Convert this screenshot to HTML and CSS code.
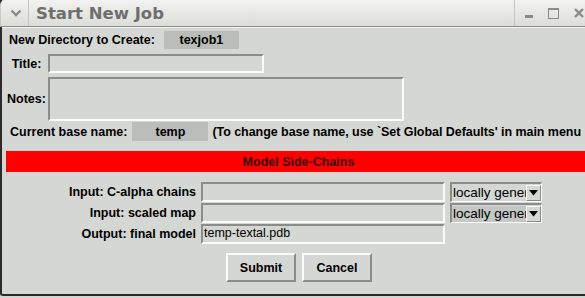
FILE: index.html
```html
<!DOCTYPE html>
<html>
<head>
<meta charset="utf-8">
<link rel="stylesheet" href="styles.css">
</head>
<body>
<div class="window">
  <div class="titlebar">
    <div class="menu-btn">
      <svg width="12" height="8" viewBox="0 0 12 8"><path d="M1.5 1.5 L6 6 L10.5 1.5" fill="none" stroke="#8a8a8a" stroke-width="2.4"/></svg>
    </div>
    <div class="title">Start New Job</div>
    <div class="controls">
      <span class="ctl-min"></span>
      <span class="ctl-max"></span>
      <span class="ctl-close">
        <svg width="10" height="10" viewBox="0 0 10 10"><path d="M1 1 L9 9 M9 1 L1 9" stroke="#8a8a8a" stroke-width="2.4"/></svg>
      </span>
    </div>
  </div>
  <div class="content">
    <div class="row-dir">
      <span class="lbl">New Directory to Create:</span>
      <span class="valbox dirbox">texjob1</span>
    </div>
    <div class="row-field row-title">
      <span class="lbl fl">Title:</span>
      <span class="entry title-entry"></span>
    </div>
    <div class="row-field row-notes">
      <span class="lbl fl">Notes:</span>
      <span class="entry notes-entry"></span>
    </div>
    <div class="row-base">
      <span class="lbl">Current base name:</span>
      <span class="valbox basebox">temp</span>
      <span class="lbl hint">(To change base name, use `Set Global Defaults' in main menu</span>
    </div>
    <div class="banner">Model Side-Chains</div>
    <div class="form">
      <span class="lbl flabel">Input: C-alpha chains</span>
      <span class="entry fentry"></span>
      <span class="combo"><span class="combo-text">locally gener</span><span class="combo-btn"><svg width="9" height="6" viewBox="0 0 9 6"><path d="M0 0 H9 L4.5 5.5 Z" fill="#000"/></svg></span></span>
      <span class="lbl flabel">Input: scaled map</span>
      <span class="entry fentry"></span>
      <span class="combo combo-dark"><span class="combo-text">locally gener</span><span class="combo-btn"><svg width="9" height="6" viewBox="0 0 9 6"><path d="M0 0 H9 L4.5 5.5 Z" fill="#000"/></svg></span></span>
      <span class="lbl flabel">Output: final model</span>
      <span class="entry fentry">temp-textal.pdb</span>
      <span></span>
    </div>
    <div class="buttons">
      <span class="btn">Submit</span>
      <span class="btn">Cancel</span>
    </div>
  </div>
</div>
</body>
</html>
```

FILE: styles.css
```css
html, body {
  margin: 0;
  padding: 0;
  background: #d4d7d3;
  overflow: hidden;
}
body {
  width: 585px;
  height: 298px;
  font-family: "Liberation Sans", Arial, sans-serif;
}
.window {
  width: 591px;
  height: 296px;
  box-sizing: border-box;
  border-left: 2px solid #2a2a2a;
  border-bottom: 2px solid #2a2a2a;
  border-bottom-left-radius: 3px;
  background: #d4d7d3;
  display: flex;
  flex-direction: column;
}
.titlebar {
  height: 26px;
  flex: none;
  display: flex;
  align-items: center;
  background: linear-gradient(#f2f2f0, #dcdcd8);
  border-bottom: 1px solid #8c8c8a;
  border-top-left-radius: 5px;
  margin-left: -2px;
  border-left: 1px solid #c8c8c6;
}
.menu-btn {
  width: 28px;
  height: 26px;
  display: flex;
  align-items: center;
  justify-content: center;
  border-right: 1px solid #c4c4c2;
  box-sizing: border-box;
  padding-left: 2px;
}
.title {
  font-family: "DejaVu Sans", sans-serif;
  font-weight: bold;
  font-size: 16.5px;
  color: #6e6e6e;
  margin-left: 7px;
  flex: 1;
  padding-top: 1px;
}
.controls {
  display: flex;
  align-items: center;
  height: 26px;
  border-left: 1px solid #c4c4c2;
  padding-left: 10px;
  width: 77px;
  box-sizing: border-box;
}
.ctl-min {
  width: 8px;
  height: 3px;
  background: #8a8a8a;
  margin-top: 6px;
}
.ctl-max {
  width: 9px;
  height: 8px;
  border: 1px solid #8a8a8a;
  border-top-width: 2px;
  margin-left: 15px;
}
.ctl-close {
  margin-left: 15px;
  display: flex;
}
.content {
  flex: 1;
  display: flex;
  flex-direction: column;
  padding-top: 3px;
  border-top: 1px solid #f2f4f1;
}
.lbl {
  font-size: 12.5px;
  font-weight: bold;
  color: #000;
  white-space: nowrap;
}
.row-dir {
  display: flex;
  align-items: center;
  height: 18px;
  padding-left: 7px;
}
.valbox {
  display: flex;
  align-items: center;
  justify-content: center;
  background: #babdba;
  font-size: 12.5px;
  font-weight: bold;
  height: 18px;
}
.dirbox {
  width: 75px;
  margin-left: 9px;
}
.row-field {
  display: flex;
  align-items: center;
}
.fl {
  width: 43px;
  text-align: center;
  flex: none;
}
.row-title {
  margin-top: 5px;
  padding-left: 3px;
}
.entry {
  box-sizing: border-box;
  border-top: 2px solid #8a8c89;
  border-left: 2px solid #8a8c89;
  border-bottom: 2px solid #fbfcfb;
  border-right: 2px solid #fbfcfb;
  background: #d4d7d3;
  display: block;
}
.title-entry {
  width: 216px;
  height: 19px;
}
.row-notes {
  margin-top: 4px;
  padding-left: 3px;
}
.notes-entry {
  width: 356px;
  height: 44px;
}
.row-base {
  display: flex;
  align-items: center;
  height: 19px;
  margin-top: 1px;
  padding-left: 8px;
}
.basebox {
  width: 76px;
  height: 19px;
  margin-left: 5px;
}
.hint {
  margin-left: 4px;
  letter-spacing: -0.05px;
}
.banner {
  margin-top: 10px;
  margin-left: 4px;
  height: 21px;
  background: #ff0000;
  color: #3a0000;
  font-size: 12.5px;
  font-weight: bold;
  display: flex;
  align-items: center;
  justify-content: center;
}
.form {
  margin-top: 10px;
  display: grid;
  grid-template-columns: 194px 244px 92px;
  column-gap: 5px;
  row-gap: 1px;
  align-items: center;
}
.flabel {
  text-align: right;
}
.fentry {
  height: 20px;
  font-size: 12.5px;
  font-weight: normal;
  line-height: 15px;
  padding-left: 1px;
  color: #000;
}
.combo {
  width: 92px;
  height: 20px;
  box-sizing: border-box;
  border-top: 2px solid #8a8c89;
  border-left: 2px solid #8a8c89;
  border-bottom: 1px solid #fbfcfb;
  border-right: 1px solid #fbfcfb;
  display: flex;
  align-items: center;
  background: #d4d7d3;
}
.combo-text {
  font-size: 13.5px;
  flex: 1;
  overflow: hidden;
  white-space: nowrap;
  padding-left: 1px;
  line-height: 16px;
}
.combo-dark .combo-text {
  background: #c4c7c3;
}
.combo-btn {
  width: 15px;
  height: 16px;
  flex: none;
  box-sizing: border-box;
  border: 1px solid;
  border-color: #fbfcfb #8a8c89 #8a8c89 #fbfcfb;
  display: flex;
  align-items: center;
  justify-content: center;
}
.buttons {
  display: flex;
  padding-left: 224px;
  gap: 6px;
  margin-top: 9px;
}
.btn {
  width: 70px;
  height: 29px;
  box-sizing: border-box;
  border: 2px solid;
  border-color: #fbfcfb #8a8c89 #8a8c89 #fbfcfb;
  display: flex;
  align-items: center;
  justify-content: center;
  font-size: 12.5px;
  font-weight: bold;
}
```
